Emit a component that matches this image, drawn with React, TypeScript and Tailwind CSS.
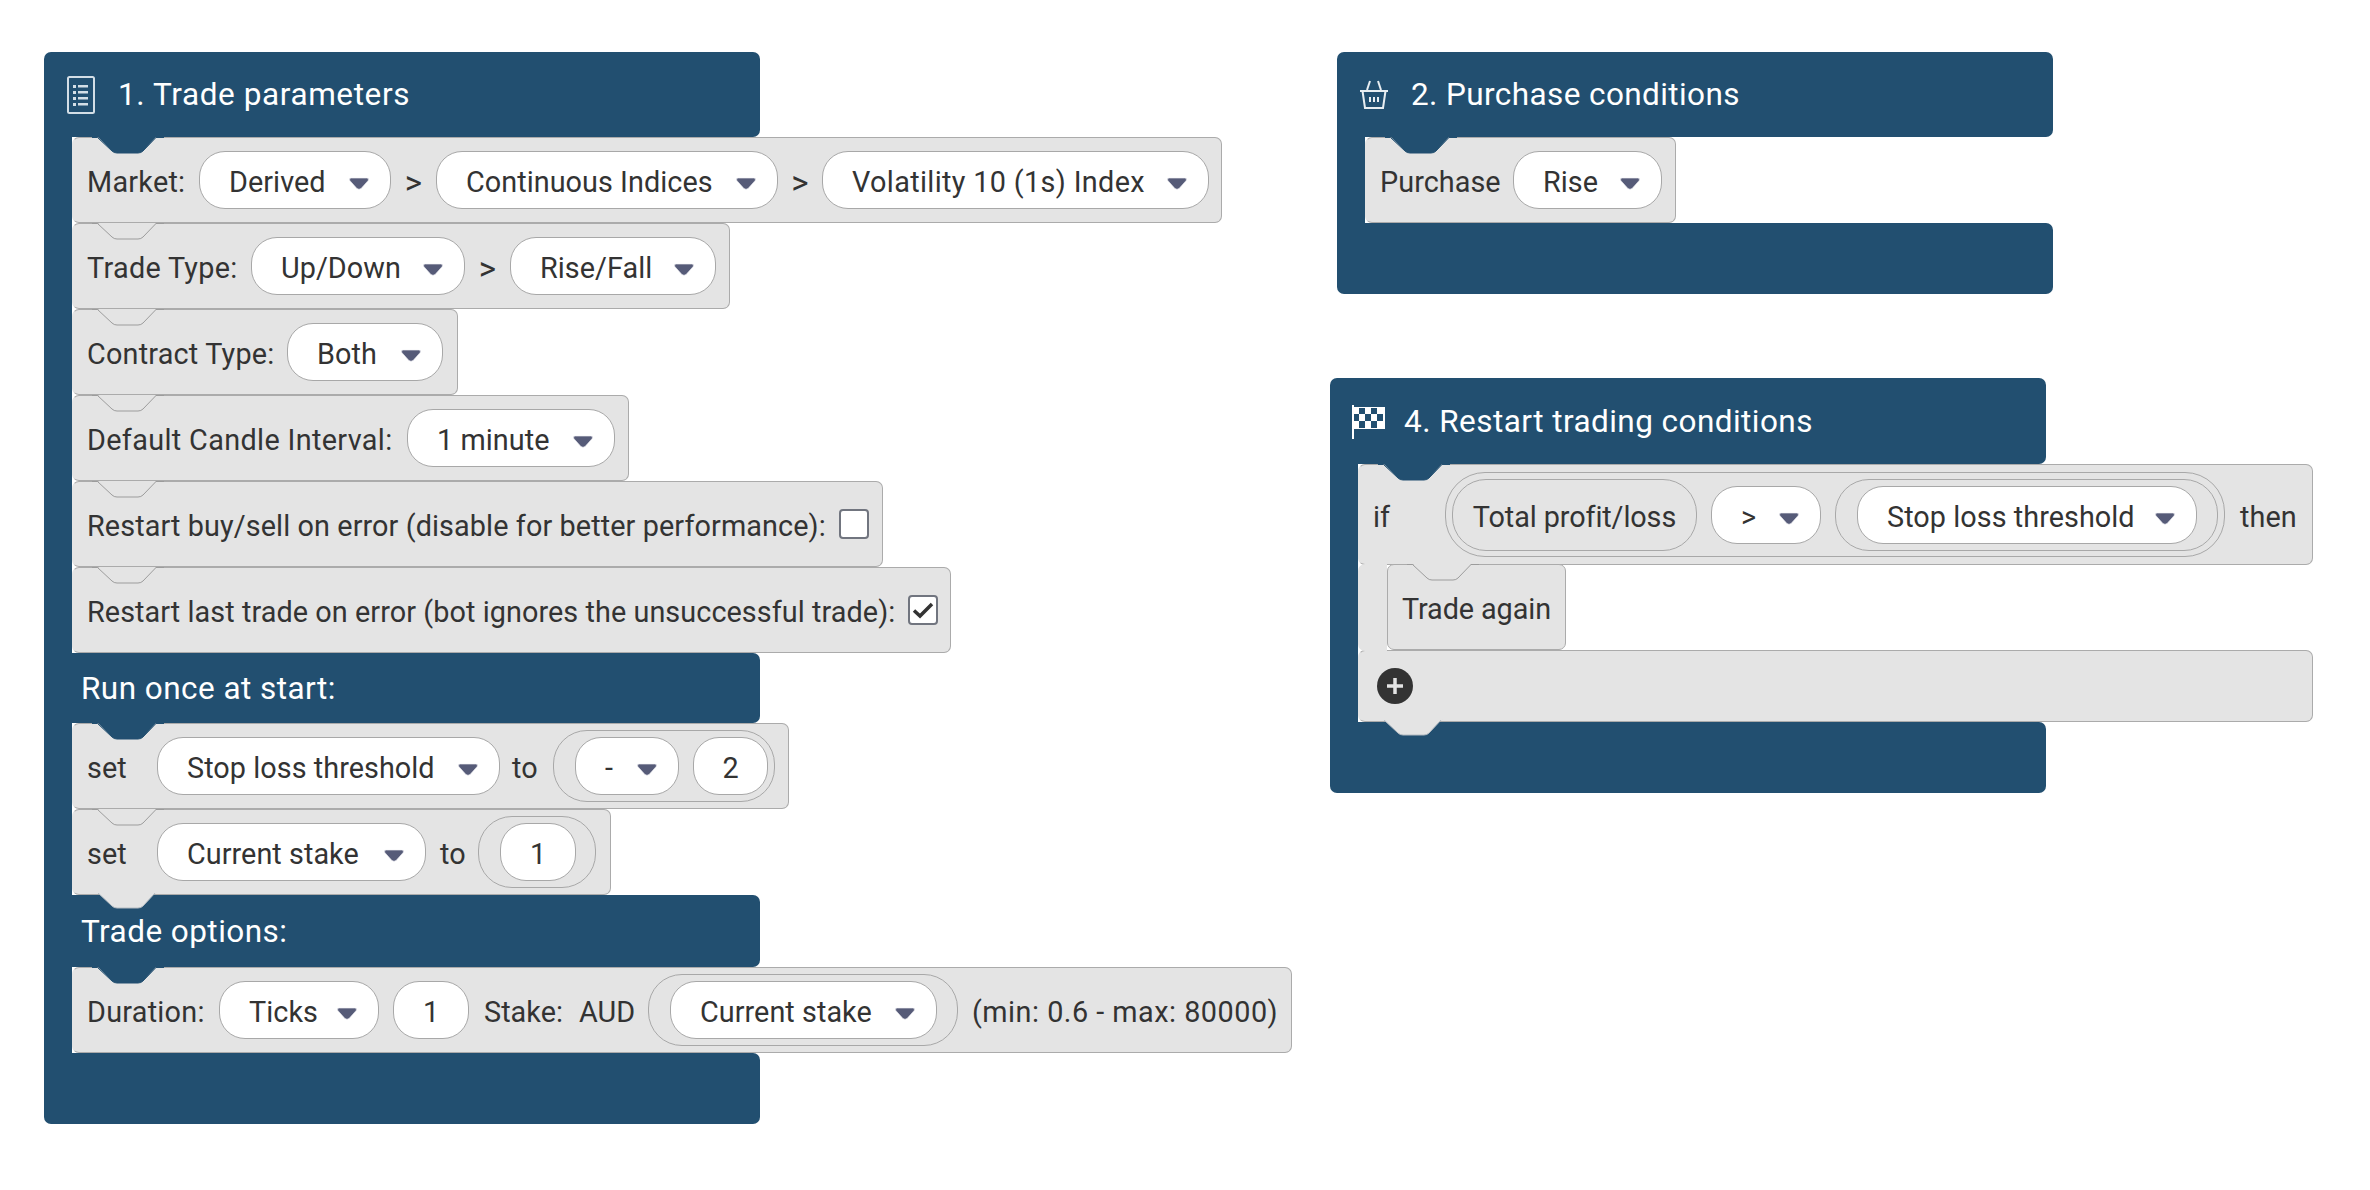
import type { ReactNode } from "react";

const Arrow = () => (
  <svg width="22" height="14" viewBox="-1 -1 21 13.400" className="mt-[2px] shrink-0">
    <path
      d="M2 0H17Q19.500 0 18.200 2.500L11.500 10Q9.500 11.500 7.500 10L.8 2.500Q-.5 0 2 0Z"
      fill="#565b78"
      stroke="#f1f1f5"
      strokeWidth="0.6"
    />
  </svg>
);

// the connector notch on top of a statement block
const Notch = ({ hat }: { hat?: boolean }) => (
  <svg width="76" height="18" viewBox="0 0 76 18" className="absolute left-[19px] top-[-1px]">
    <path
      d="M0 0H6L20 14Q22 16 25 16H46Q49 16 51 14L64 0H72V-1H0Z"
      fill={hat ? "#224f70" : "#e4e4e4"}
    />
    <path
      d="M0 .5H5.500L20 14Q22 16 25 16H46Q49 16 51 14L64 .5H72"
      fill="none"
      stroke={hat ? "#224f70" : "#9c9c9c"}
      strokeWidth="1"
    />
  </svg>
);

// the tab that hangs below a block
const Tab = () => (
  <svg width="76" height="18" viewBox="0 0 76 18" className="absolute left-[19px] bottom-[-16px] z-10">
    <path d="M5 0L20 14Q22 16 25 16H46Q49 16 51 14L64 0Z" fill="#e4e4e4" stroke="#b5bcc2" strokeWidth="1" />
    <rect x="5" y="-1" width="59" height="2" fill="#e4e4e4" />
  </svg>
);

type RowProps = {
  className: string;
  hat?: boolean;
  tab?: boolean;
  children: ReactNode;
};

const Row = ({ className, hat, tab, children }: RowProps) => (
  <div
    className={`relative flex items-center h-[86px] pl-[14px] bg-[#e4e4e4] border border-[#ababab] border-l-[#e4e4e4] rounded-[7px] box-border shrink-0 whitespace-nowrap ${className}`}
  >
    <Notch hat={hat} />
    {tab ? <Tab /> : null}
    {children}
  </div>
);

// text in a row sits a little under the middle of the row
const Label = ({ className, children }: { className?: string; children: ReactNode }) => (
  <span className={`pt-[6px] shrink-0 ${className ?? ""}`}>{children}</span>
);

const Pill = ({ className, text, arrow }: { className: string; text: string; arrow?: boolean }) => (
  <div
    className={`flex items-center h-[58px] pt-[6px] bg-white border border-[#a8a8a8] rounded-[26px] box-border shrink-0 ${
      arrow ? "justify-between pl-[29px] pr-[20px]" : "justify-center"
    } ${className}`}
  >
    <span>{text}</span>
    {arrow ? <Arrow /> : null}
  </div>
);

const Outline = ({ className, children }: { className: string; children: ReactNode }) => (
  <div className={`flex items-center h-[72px] border border-[#a8a8a8] rounded-[34px] box-border shrink-0 ${className}`}>
    {children}
  </div>
);

const Check = ({ checked }: { checked?: boolean }) => (
  <div className="flex items-center justify-center w-[30px] h-[30px] bg-white border-2 border-[#71757f] rounded-[4px] box-border">
    {checked ? (
      <svg width="22" height="18" viewBox="0 0 22 18">
        <path d="M2 9.500L8 15L20 3" fill="none" stroke="#333333" strokeWidth="3.500" />
      </svg>
    ) : null}
  </div>
);

const Section = ({ children }: { children: ReactNode }) => (
  <div className="flex">
    <div className="w-[28px] bg-[#224f70] shrink-0" />
    <div className="flex flex-col">{children}</div>
  </div>
);

const Bar = ({ className, children }: { className: string; children?: ReactNode }) => (
  <div
    className={`flex items-center w-[716px] bg-[#224f70] text-white text-[31.5px] tracking-[0.45px] box-border ${className}`}
  >
    {children}
  </div>
);

const DocIcon = () => (
  <svg width="28" height="38" viewBox="0 0 28 38" className="shrink-0">
    <rect x="1" y="1" width="26" height="36" rx="1.500" fill="none" stroke="#d3dee6" strokeWidth="2" />
    <g fill="#d3dee6">
      <rect x="6" y="9" width="3" height="3" />
      <rect x="6" y="15" width="3" height="3" />
      <rect x="6" y="21" width="3" height="3" />
      <rect x="6" y="27" width="3" height="3" />
      <rect x="11" y="9" width="10" height="2.500" />
      <rect x="11" y="15" width="10" height="2.500" />
      <rect x="11" y="21" width="10" height="2.500" />
      <rect x="11" y="27" width="10" height="2.500" />
    </g>
  </svg>
);

const BasketIcon = () => (
  <svg width="30" height="30" viewBox="0 0 30 30" className="shrink-0">
    <g fill="none" stroke="#e8eef2" strokeWidth="2">
      <path d="M1 11H29" />
      <path d="M3.500 11L6 28H24L26.500 11" />
      <path d="M8 10L11 1" />
      <path d="M22 10L19 1" />
    </g>
    <g fill="#e8eef2">
      <rect x="10" y="17" width="2" height="5" />
      <rect x="14" y="17" width="2" height="5" />
      <rect x="18" y="17" width="2" height="5" />
    </g>
  </svg>
);

const FlagIcon = () => (
  <svg width="33" height="34" viewBox="0 0 33 34" className="shrink-0">
    <rect x="0" y="0" width="2" height="34" fill="#ffffff" />
    <rect x="2" y="2" width="31" height="22" fill="#ffffff" />
    <g fill="#224f70">
      <rect x="7" y="3" width="6" height="6" />
      <rect x="19" y="3" width="6" height="6" />
      <rect x="2" y="9" width="5" height="7" />
      <rect x="13" y="9" width="6" height="7" />
      <rect x="25" y="9" width="6" height="7" />
      <rect x="7" y="16" width="6" height="7" />
      <rect x="19" y="16" width="6" height="7" />
    </g>
  </svg>
);

const App = () => {
  return (
    <div className="relative w-[2370px] h-[1190px] bg-white overflow-hidden font-['Roboto',sans-serif] text-[28.8px] tracking-[0.05px] text-[#333333]">
      {/* 1. Trade parameters */}
      <div className="absolute left-[44px] top-[52px]">
        <Bar className="h-[85px] rounded-t-[7px] rounded-br-[7px] pl-[23px]">
          <div className="w-[51px]">
            <DocIcon />
          </div>
          <span className="tracking-[0.6px]">1. Trade parameters</span>
        </Bar>
        <Section>
          <Row className="w-[1150px]" hat>
            <Label className="w-[112px] tracking-[0.25px]">Market:</Label>
            <Pill className="w-[192px]" text="Derived" arrow />
            <Label className="w-[45px] text-center text-[33px]">&gt;</Label>
            <Pill className="w-[342px]" text="Continuous Indices" arrow />
            <Label className="w-[44px] text-center text-[33px]">&gt;</Label>
            <Pill className="w-[387px] tracking-[0.35px]" text="Volatility 10 (1s) Index" arrow />
          </Row>
          <Row className="w-[658px]">
            <Label className="w-[164px] tracking-[0.3px]">Trade Type:</Label>
            <Pill className="w-[214px]" text="Up/Down" arrow />
            <Label className="w-[45px] text-center text-[33px]">&gt;</Label>
            <Pill className="w-[206px]" text="Rise/Fall" arrow />
          </Row>
          <Row className="w-[386px]">
            <Label className="w-[200px] tracking-[0.2px]">Contract Type:</Label>
            <Pill className="w-[156px]" text="Both" arrow />
          </Row>
          <Row className="w-[557px]">
            <Label className="w-[320px] tracking-[0.35px]">Default Candle Interval:</Label>
            <Pill className="w-[208px]" text="1 minute" arrow />
          </Row>
          <Row className="w-[811px]">
            <Label className="w-[752px] tracking-[0.1px]">Restart buy/sell on error (disable for better performance):</Label>
            <Check />
          </Row>
          <Row className="w-[879px]">
            <Label className="w-[821px] tracking-[0.07px]">Restart last trade on error (bot ignores the unsuccessful trade):</Label>
            <Check checked />
          </Row>
        </Section>
        <Bar className="h-[70px] rounded-r-[7px] pl-[37px] pt-[2px]">Run once at start:</Bar>
        <Section>
          <Row className="w-[717px]" hat>
            <Label className="w-[70px]">set</Label>
            <Pill className="w-[343px]" text="Stop loss threshold" arrow />
            <Label className="w-[53px] pl-[12px]">to</Label>
            <Outline className="w-[222px] pl-[21px]">
              <Pill className="w-[104px]" text="-" arrow />
              <Pill className="w-[75px] ml-[14px]" text="2" />
            </Outline>
          </Row>
          <Row className="w-[539px]" tab>
            <Label className="w-[70px]">set</Label>
            <Pill className="w-[269px]" text="Current stake" arrow />
            <Label className="w-[52px] pl-[14px]">to</Label>
            <Outline className="w-[118px] pl-[21px]">
              <Pill className="w-[76px]" text="1" />
            </Outline>
          </Row>
        </Section>
        <Bar className="h-[72px] rounded-r-[7px] pl-[37px] pt-[2px]">Trade options:</Bar>
        <Section>
          <Row className="w-[1220px]" hat>
            <Label className="w-[132px] tracking-[0.25px]">Duration:</Label>
            <Pill className="w-[160px]" text="Ticks" arrow />
            <Pill className="w-[76px] ml-[14px]" text="1" />
            <Label className="w-[110px] pl-[15px]">Stake:</Label>
            <Label className="w-[69px]">AUD</Label>
            <Outline className="w-[310px] pl-[21px]">
              <Pill className="w-[267px]" text="Current stake" arrow />
            </Outline>
            <Label className="pl-[14px] tracking-[0.5px]">(min: 0.6 - max: 80000)</Label>
          </Row>
        </Section>
        <Bar className="h-[71px] rounded-b-[7px] rounded-tr-[7px]" />
      </div>

      {/* 2. Purchase conditions */}
      <div className="absolute left-[1337px] top-[52px]">
        <Bar className="h-[85px] rounded-t-[7px] rounded-br-[7px] pl-[22px]">
          <div className="w-[52px]">
            <BasketIcon />
          </div>
          <span className="tracking-[0.4px]">2. Purchase conditions</span>
        </Bar>
        <Section>
          <Row className="w-[311px]" hat>
            <Label className="w-[133px]">Purchase</Label>
            <Pill className="w-[149px]" text="Rise" arrow />
          </Row>
        </Section>
        <Bar className="h-[71px] rounded-b-[7px] rounded-tr-[7px]" />
      </div>

      {/* 4. Restart trading conditions */}
      <div className="absolute left-[1330px] top-[378px]">
        <Bar className="h-[86px] rounded-t-[7px] rounded-br-[7px] pl-[22px] pt-[2px]">
          <div className="w-[52px]">
            <FlagIcon />
          </div>
          <span>4. Restart trading conditions</span>
        </Bar>
        <Section>
          <div className="flex flex-col w-[955px]">
            <Row className="w-[955px] !h-[101px]" hat>
              <Label className="w-[72px]">if</Label>
              <div className="flex items-center w-[780px] h-[85px] pl-[6px] border border-[#a8a8a8] rounded-[40px] box-border">
                <Outline className="w-[245px] justify-center">
                  <Label className="tracking-[-0.1px]">Total profit/loss</Label>
                </Outline>
                <Pill className="w-[110px] ml-[14px]" text=">" arrow />
                <Outline className="w-[383px] ml-[14px] pl-[21px]">
                  <Pill className="w-[340px]" text="Stop loss threshold" arrow />
                </Outline>
              </div>
              <Label className="ml-[15px]">then</Label>
            </Row>
            <div className="flex -mt-px h-[87px]">
              <div className="w-[29px] bg-[#e4e4e4] rounded-l-[7px] z-10 shrink-0" />
              <Row className="w-[179px] !border-l-[#ababab]">
                <Label className="tracking-[-0.1px]">Trade again</Label>
              </Row>
            </div>
            <div className="relative flex items-center w-[955px] h-[72px] -mt-px pl-[18px] bg-[#e4e4e4] border border-[#ababab] border-l-[#e4e4e4] rounded-[7px] box-border">
              <Tab />
              <div className="flex items-center justify-center w-[36px] h-[36px] rounded-full bg-[#333333]">
                <svg width="20" height="20" viewBox="0 0 20 20">
                  <path d="M10 2V18M2 10H18" stroke="#e4e4e4" strokeWidth="3.500" />
                </svg>
              </div>
            </div>
          </div>
        </Section>
        <Bar className="h-[71px] rounded-b-[7px] rounded-tr-[7px]" />
      </div>
    </div>
  );
};

export default App;
